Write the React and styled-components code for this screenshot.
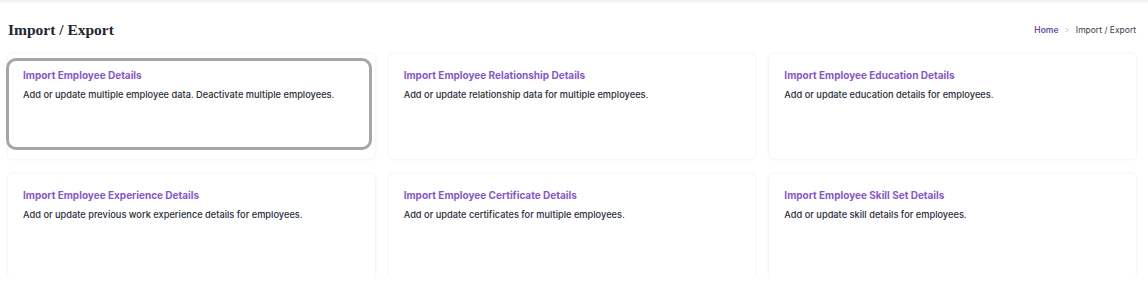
import React from "react";
import styled, { createGlobalStyle } from "styled-components";

const GlobalStyle = createGlobalStyle`
  body {
    margin: 0;
    background: #ffffff;
    font-family: Inter, "Open Sans", sans-serif;
  }
`;

const TopShade = styled.div`
  height: 4px;
  background: linear-gradient(#eeeeee, #ffffff);
`;

const Page = styled.div`
  padding: 0 12px 0 8px;
`;

const Header = styled.div`
  display: flex;
  align-items: center;
  justify-content: space-between;
  height: 50px;
  padding-top: 1px;
  box-sizing: border-box;
`;

const Title = styled.h1`
  margin: 0;
  font-family: "Liberation Serif", serif;
  font-size: 15.5px;
  font-weight: 700;
  color: #23252f;
`;

const Crumbs = styled.div`
  display: flex;
  align-items: center;
  gap: 6px;
  font-size: 8.5px;
  color: #3b3d48;
`;

const CrumbLink = styled.span`
  color: #6a4fa3;
  font-weight: 600;
`;

const CrumbSep = styled.span`
  color: #c4c4c4;
  font-size: 8px;
`;

const Grid = styled.div`
  display: grid;
  grid-template-columns: repeat(3, 1fr);
  column-gap: 14px;
  row-gap: 15px;
`;

const Card = styled.div`
  position: relative;
  height: 105px;
  padding: 15px 15px;
  box-sizing: border-box;
  background: #ffffff;
  border-radius: 4px;
  box-shadow: 0 0 3px rgba(0, 0, 0, 0.1);

  ${(p) =>
    p.$focused &&
    `
    &::after {
      content: "";
      position: absolute;
      left: -2px;
      top: 4px;
      right: 3px;
      bottom: 9px;
      border: 3px solid #a6a6a6;
      border-radius: 10px;
    }
  `}
`;

const CardTitle = styled.div`
  font-size: 10px;
  font-weight: 700;
  color: #8759c5;
  margin-bottom: 8px;
`;

const CardText = styled.div`
  font-size: 9.25px;
  font-weight: 500;
  color: #2c2e3a;
`;

const items = [
  ["Import Employee Details", "Add or update multiple employee data. Deactivate multiple employees."],
  ["Import Employee Relationship Details", "Add or update relationship data for multiple employees."],
  ["Import Employee Education Details", "Add or update education details for employees."],
  ["Import Employee Experience Details", "Add or update previous work experience details for employees."],
  ["Import Employee Certificate Details", "Add or update certificates for multiple employees."],
  ["Import Employee Skill Set Details", "Add or update skill details for employees."],
];

const App = () => {
  return (
    <>
      <GlobalStyle />
      <TopShade />
      <Page>
        <Header>
          <Title>Import / Export</Title>
          <Crumbs>
            <CrumbLink>Home</CrumbLink>
            <CrumbSep>&gt;</CrumbSep>
            <span>Import / Export</span>
          </Crumbs>
        </Header>
        <Grid>
          {items.map(([title, text], i) => (
            <Card key={title} $focused={i === 0}>
              <CardTitle>{title}</CardTitle>
              <CardText>{text}</CardText>
            </Card>
          ))}
        </Grid>
      </Page>
    </>
  );
};

export default App;
